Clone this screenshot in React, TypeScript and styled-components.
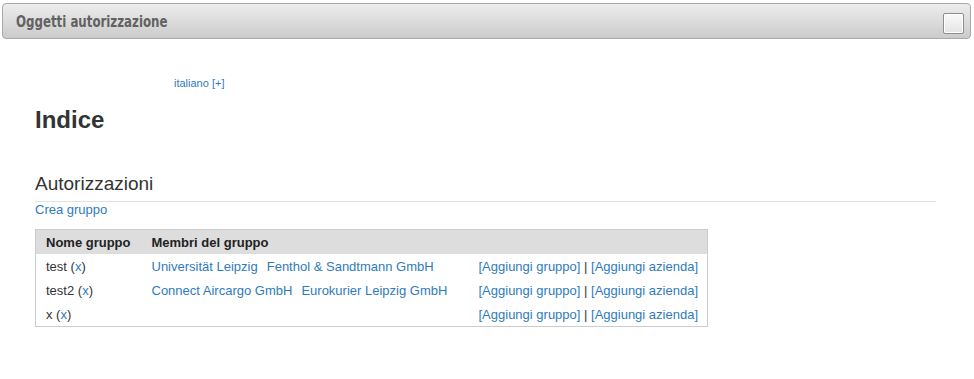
import styled, { createGlobalStyle } from "styled-components";

const GlobalStyle = createGlobalStyle`
  body {
    margin: 0;
    background: #fff;
    font-family: "Liberation Sans", Arial, sans-serif;
    color: #333;
  }
`;

type Group = {
  name: string;
  members: string[];
};

const groups: Group[] = [
  { name: "test", members: ["Universität Leipzig", "Fenthol & Sandtmann GmbH"] },
  { name: "test2", members: ["Connect Aircargo GmbH", "Eurokurier Leipzig GmbH"] },
  { name: "x", members: [] },
];

const App = () => {
  return (
    <>
      <GlobalStyle />
      <TitleBar>
        <Title>Oggetti autorizzazione</Title>
        <ToggleBox />
      </TitleBar>
      <Content>
        <LangRow>
          <Link href="#">italiano [+]</Link>
        </LangRow>
        <PageTitle>Indice</PageTitle>
        <SectionTitle>Autorizzazioni</SectionTitle>
        <CreateLink href="#">Crea gruppo</CreateLink>
        <GroupTable>
          <colgroup>
            <col style={{ width: 106 }} />
            <col style={{ width: 327 }} />
            <col />
          </colgroup>
          <thead>
            <tr>
              <HeadCell>Nome gruppo</HeadCell>
              <HeadCell>Membri del gruppo</HeadCell>
              <HeadCell />
            </tr>
          </thead>
          <tbody>
            {groups.map((g) => (
              <tr key={g.name}>
                <Cell>
                  {g.name} (<Link href="#">x</Link>)
                </Cell>
                <Cell>
                  {g.members.map((m) => (
                    <Member key={m} href="#">
                      {m}
                    </Member>
                  ))}
                </Cell>
                <Cell>
                  <Link href="#">[Aggiungi gruppo]</Link> | <Link href="#">[Aggiungi azienda]</Link>
                </Cell>
              </tr>
            ))}
          </tbody>
        </GroupTable>
      </Content>
    </>
  );
};

const TitleBar = styled.div`
  display: flex;
  align-items: center;
  justify-content: space-between;
  box-sizing: border-box;
  height: 36px;
  margin: 3px 3px 0 2px;
  padding: 0 6px 0 13px;
  border: 1px solid #a9a9a9;
  border-radius: 4px;
  background: linear-gradient(to bottom, #ededed 0%, #dcdcdc 50%, #cbcbcb 100%);
`;

const Title = styled.span`
  display: inline-block;
  font-family: "DejaVu Sans Condensed", "DejaVu Sans", sans-serif;
  font-weight: bold;
  font-size: 16px;
  color: #626262;
  transform: scaleX(0.82);
  transform-origin: left center;
`;

const ToggleBox = styled.div`
  width: 19px;
  height: 19px;
  border: 1px solid #8e8e8e;
  border-radius: 2px;
  background: linear-gradient(to bottom, #fafafa, #e4e4e4);
  box-shadow: inset 0 0 0 1px #fff;
  margin-top: 4px;
`;

const Content = styled.div`
  padding: 0 38px 0 35px;
`;

const LangRow = styled.div`
  margin: 38px 0 0 139px;
  font-size: 11px;
  line-height: 13px;
`;

const Link = styled.a`
  color: #2f7bbd;
  text-decoration: none;
`;

const PageTitle = styled.h1`
  margin: 16px 0 0;
  font-size: 24px;
  line-height: 28px;
  font-weight: bold;
  color: #333;
`;

const SectionTitle = styled.h2`
  margin: 39px 0 0;
  padding-bottom: 6px;
  font-size: 19px;
  line-height: 22px;
  font-weight: normal;
  color: #333;
  border-bottom: 1px solid #e2e2e2;
`;

const CreateLink = styled(Link)`
  display: block;
  font-size: 13px;
  line-height: 16px;
`;

const GroupTable = styled.table`
  margin-top: 11px;
  width: 673px;
  table-layout: fixed;
  border-collapse: collapse;
  border: 1px solid #cccccc;
  font-size: 13px;
`;

const HeadCell = styled.th`
  height: 24px;
  padding: 0 0 0 10px;
  background: #dddddd;
  text-align: left;
  font-weight: bold;
  color: #222;
`;

const Cell = styled.td`
  height: 24px;
  padding: 0 0 0 10px;
  white-space: nowrap;
  color: #333;
`;

const Member = styled(Link)`
  margin-right: 9px;
`;

export default App;
